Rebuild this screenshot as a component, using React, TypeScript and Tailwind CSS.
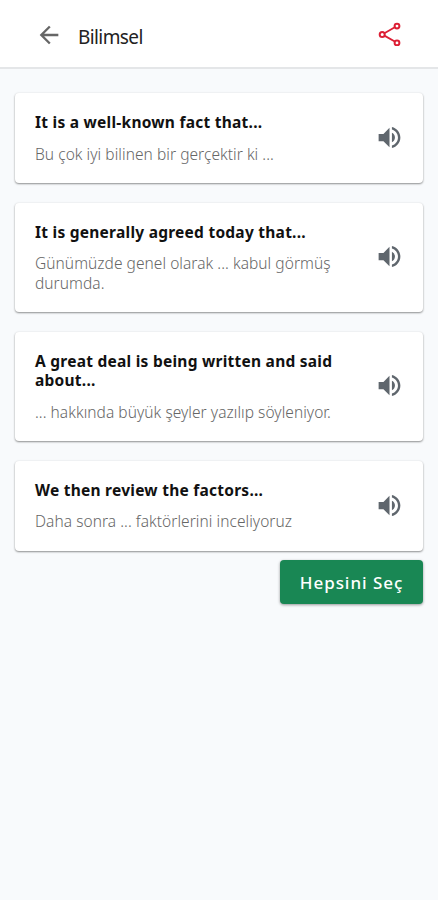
import { MdArrowBack, MdVolumeUp } from 'react-icons/md';

const PHRASES = [
  { en: 'It is a well-known fact that...', tr: 'Bu çok iyi bilinen bir gerçektir ki ...' },
  { en: 'It is generally agreed today that...', tr: 'Günümüzde genel olarak ... kabul görmüş durumda.' },
  { en: 'A great deal is being written and said about...', tr: '... hakkında büyük şeyler yazılıp söyleniyor.' },
  { en: 'We then review the factors...', tr: 'Daha sonra ... faktörlerini inceliyoruz' },
];

function ShareIcon() {
  return (
    <svg className="w-6 h-6" viewBox="0 0 24 24" fill="none" stroke="currentColor" strokeWidth="2">
      <circle cx="4.2" cy="12.4" r="2.5" />
      <circle cx="19" cy="4.1" r="2.4" />
      <circle cx="19" cy="20.9" r="2.4" />
      <path d="M6.4 11.2 16.8 5.3M6.4 13.6l10.4 5.9" strokeWidth="1.8" />
    </svg>
  );
}

function PhraseCard({ en, tr }: { en: string; tr: string }) {
  return (
    <div className="flex items-center rounded bg-white pt-5 pb-[19px] pl-5 pr-[19px] shadow-[0_1px_2px_rgba(0,0,0,0.42),0_0_3px_rgba(0,0,0,0.05)]">
      <div className="w-[312px] leading-[19.5px]">
        <p className="text-[15.5px] font-bold tracking-[0.25px] text-[#111111]">{en}</p>
        <p className="mt-3 text-[15.5px] font-light tracking-[0.05px] text-[#666666]">{tr}</p>
      </div>
      <button className="ml-auto mb-0.5 text-[#5f666d]" aria-label="Dinle">
        <MdVolumeUp className="w-[29px] h-[29px]" />
      </button>
    </div>
  );
}

export default function App() {
  return (
    <div className="min-h-screen bg-[#f8fafc] font-['Noto_Sans',sans-serif]">
      {/* ── Header ───────────────────────────────────────────────────── */}
      <header className="flex items-center h-[69px] pl-[35px] pr-9 bg-white border-b-2 border-[#e4e6e8]">
        <button className="mt-0.5 text-[#666666]" aria-label="Geri">
          <MdArrowBack className="w-7 h-7" />
        </button>
        <h1 className="ml-[15px] mt-2 text-[19px] tracking-[-0.6px] text-[#222222]">Bilimsel</h1>
        <button className="ml-auto mt-px text-[#dc1f35]" aria-label="Paylaş">
          <ShareIcon />
        </button>
      </header>

      {/* ── Phrases ──────────────────────────────────────────────────── */}
      <main className="flex flex-col px-[15px] pt-6">
        <div className="flex flex-col gap-[19.5px]">
          {PHRASES.map((p) => (
            <PhraseCard key={p.en} en={p.en} tr={p.tr} />
          ))}
        </div>
        <button className="self-end mt-[9px] w-[143px] h-11 rounded bg-[#198754] pt-0.5 text-[17px] font-medium tracking-[0.95px] text-white shadow-[0_1px_3px_rgba(0,0,0,0.4)]">
          Hepsini Seç
        </button>
      </main>
    </div>
  );
}
